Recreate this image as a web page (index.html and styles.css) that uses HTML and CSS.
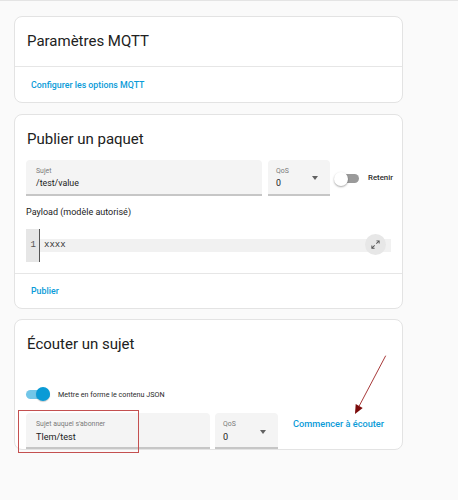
FILE: index.html
```html
<!DOCTYPE html>
<html lang="fr">
<head>
<meta charset="utf-8">
<title>MQTT</title>
<link rel="stylesheet" href="styles.css">
</head>
<body>
<main class="page">
  <section class="card">
    <h2 class="card-title card-title--sep">Paramètres MQTT</h2>
    <div class="card-actions"><span class="btn-link">Configurer les options MQTT</span></div>
  </section>

  <section class="card">
    <h2 class="card-title">Publier un paquet</h2>
    <div class="card-content">
      <div class="row">
        <div class="field field--topic">
          <span class="field-label">Sujet</span>
          <span class="field-value">/test/value</span>
        </div>
        <div class="field field--qos">
          <span class="field-label">QoS</span>
          <span class="field-value">0</span>
          <span class="caret"></span>
        </div>
        <div class="switch switch--off"><span class="track"></span><span class="thumb"></span></div>
        <span class="switch-label">Retenir</span>
      </div>
      <div class="payload-label">Payload (modèle autorisé)</div>
      <div class="editor">
        <div class="gutter"><span class="lineno">1</span></div>
        <div class="lines"><div class="line">xxxx</div></div>
        <span class="expand">
          <svg viewBox="0 0 24 24" width="11" height="11"><path fill="#555" d="M10,21V19H6.41L10.91,14.5L9.5,13.09L5,17.59V14H3V21H10M14.5,10.91L19,6.41V10H21V3H14V5H17.59L13.09,9.5L14.5,10.91Z"/></svg>
        </span>
      </div>
    </div>
    <div class="card-actions card-actions--sep"><span class="btn-link">Publier</span></div>
  </section>

  <section class="card card--listen">
    <h2 class="card-title">Écouter un sujet</h2>
    <div class="card-content card-content--listen">
      <div class="toggle-row">
        <div class="switch switch--on"><span class="track"></span><span class="thumb"></span></div>
        <span class="switch-label switch-label--json">Mettre en forme le contenu JSON</span>
      </div>
      <div class="row row--listen">
        <div class="field field--sub">
          <span class="field-label">Sujet auquel s'abonner</span>
          <span class="field-value field-value--big">Tlem/test</span>
        </div>
        <div class="field field--qos2">
          <span class="field-label">QoS</span>
          <span class="field-value field-value--big">0</span>
          <span class="caret"></span>
        </div>
        <span class="btn-link btn-link--listen">Commencer à écouter</span>
      </div>
    </div>
  </section>
</main>

<svg class="annot" viewBox="0 0 458 500" width="458" height="500">
  <rect x="18.5" y="410.5" width="120" height="42" fill="none" stroke="#c45050" stroke-width="1"/>
  <line x1="385.7" y1="355.7" x2="359.2" y2="406" stroke="#a83a3a" stroke-width="1"/>
  <polygon points="355,414 362.7,407.9 355.7,404.1" fill="#7b0a0a"/>
</svg>
</body>
</html>
```

FILE: styles.css
```css
* { box-sizing: border-box; }

body {
  margin: 0;
  background: #fafafa;
  border-top: 1px solid #e4e4e4;
  font-family: Roboto, "Liberation Sans", Arial, sans-serif;
  color: #212121;
  position: relative;
  height: 500px;
  overflow: hidden;
}

.page {
  padding: 15px 0 0 14px;
  width: 403px;
  display: flex;
  flex-direction: column;
  gap: 10.5px;
}

.card {
  background: #fff;
  border: 1px solid #e3e3e3;
  border-radius: 8px;
  overflow: hidden;
}

.card-title {
  margin: 0;
  padding: 12px 12px 0;
  font-size: 15px;
  line-height: 24px;
  font-weight: 400;
}

.card-title--sep {
  padding-bottom: 13px;
  border-bottom: 1px solid #e6e6e6;
}

.card-actions {
  height: 35px;
  display: flex;
  align-items: center;
  padding: 0 16px;
}

.card-actions--sep {
  border-top: 1px solid #e6e6e6;
}

.btn-link {
  color: #0a9bd8;
  font-size: 8.8px;
  font-weight: 500;
  white-space: nowrap;
}

.card-content {
  padding: 9px 11px 11px 11px;
}

.row {
  display: flex;
  align-items: center;
}

.field {
  position: relative;
  flex-shrink: 0;
  height: 36px;
  background: #f4f4f4;
  border-radius: 4px 4px 0 0;
  border-bottom: 2px solid #c6c6c6;
  padding: 7px 10px 0;
  display: flex;
  flex-direction: column;
}

.field-label {
  font-size: 6.9px;
  line-height: 9px;
  color: #7a7a7a;
}

.field-value {
  font-size: 8.8px;
  line-height: 12px;
  margin-top: 1px;
  color: #212121;
}

.field-value--big {
  font-size: 9.1px;
  margin-top: 2px;
}

.field--topic { width: 236px; }
.field--qos { width: 62px; margin-left: 6px; padding-left: 8px; }

.caret {
  position: absolute;
  right: 12.5px;
  top: 16px;
  width: 0;
  height: 0;
  border-left: 3.5px solid transparent;
  border-right: 3.5px solid transparent;
  border-top: 4px solid #616161;
}

.switch {
  position: relative;
  flex-shrink: 0;
  width: 24px;
  height: 14px;
  display: flex;
  align-items: center;
}

.switch .track {
  display: block;
  width: 100%;
  height: 9px;
  border-radius: 5px;
}

.switch .thumb {
  position: absolute;
  top: 0;
  width: 14px;
  height: 14px;
  border-radius: 50%;
}

.switch--off { margin-left: 5px; margin-top: 2px; }
.switch--off .track { background: #9a9a9a; margin-left: 2px; }
.switch--off .thumb {
  left: -1px;
  background: #fff;
  box-shadow: 0 1px 2px rgba(0,0,0,0.35);
}

.switch--on .track { background: #72c6e8; }
.switch--on .thumb {
  left: 10px;
  background: #0a9bd6;
  box-shadow: 0 1px 1px rgba(0,0,0,0.2);
}

.switch-label {
  font-size: 7.8px;
  font-weight: 500;
  margin-left: 9px;
  white-space: nowrap;
  color: #2a2a2a;
}

.payload-label {
  margin-top: 9px;
  font-size: 9px;
  line-height: 14px;
  color: #222;
}

.editor {
  position: relative;
  margin-top: 10px;
  height: 33px;
  display: flex;
}

.gutter {
  width: 14px;
  background: #e6e6e6;
  border-right: 1px solid #555;
  display: flex;
  justify-content: flex-end;
  padding-top: 10px;
  padding-right: 3px;
}

.lineno, .line {
  font-family: "Liberation Mono", "DejaVu Sans Mono", monospace;
  font-size: 9px;
  line-height: 13px;
  color: #555;
}

.lines {
  flex: 1;
  padding-top: 10px;
}

.line {
  background: #f1f1f1;
  padding-left: 4px;
  color: #333;
}

.expand {
  position: absolute;
  right: 5px;
  top: 5px;
  width: 21px;
  height: 21px;
  border-radius: 50%;
  background: #e7e7e7;
  display: flex;
  align-items: center;
  justify-content: center;
}

.card-content--listen {
  padding: 30px 11px 0;
}

.toggle-row {
  display: flex;
  align-items: center;
  height: 16px;
}

.switch-label--json {
  margin-left: 8px;
  font-weight: 400;
  font-size: 7.2px;
  color: #2a2a2a;
}

.row--listen {
  margin-top: 11px;
  align-items: flex-start;
}

.field--sub { width: 184px; }
.field--qos2 { width: 63px; margin-left: 5px; padding-left: 8px; }
.field--qos2 .caret { top: 17px; }

.btn-link--listen {
  margin-left: 15px;
  margin-top: 5px;
  font-size: 9.2px;
}

.annot {
  position: absolute;
  left: 0;
  top: -1px;
  pointer-events: none;
}
```
